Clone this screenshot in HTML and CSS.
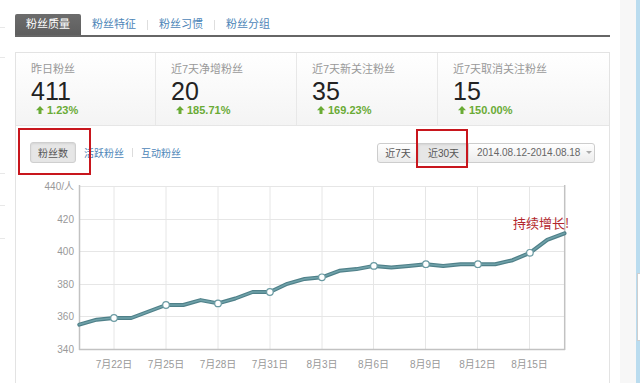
FILE: index.html
```html
<!DOCTYPE html>
<html lang="zh-CN">
<head>
<meta charset="utf-8">
<title>粉丝质量</title>
<link rel="stylesheet" href="styles.css">
</head>
<body>
<div class="page">
  <div class="edge">
    <i class="edge-line"></i><i class="edge-line"></i><i class="edge-line"></i><i class="edge-line"></i><i class="edge-line"></i>
  </div>
  <main class="main">
    <nav class="tabs">
      <span class="tab active">粉丝质量</span>
      <span class="tab">粉丝特征</span>
      <span class="tab-sep"></span>
      <span class="tab">粉丝习惯</span>
      <span class="tab-sep"></span>
      <span class="tab">粉丝分组</span>
    </nav>
    <section class="card">
      <div class="stats">
        <div class="stat">
          <div class="stat-label">昨日粉丝</div>
          <div class="stat-num">411</div>
          <div class="stat-pct"><svg class="up" viewBox="0 0 8 8"><path d="M4 0 L8 4.2 L5.5 4.2 L5.5 8 L2.5 8 L2.5 4.2 L0 4.2 Z"/></svg>1.23%</div>
        </div>
        <div class="stat">
          <div class="stat-label">近7天净增粉丝</div>
          <div class="stat-num">20</div>
          <div class="stat-pct"><svg class="up" viewBox="0 0 8 8"><path d="M4 0 L8 4.2 L5.5 4.2 L5.5 8 L2.5 8 L2.5 4.2 L0 4.2 Z"/></svg>185.71%</div>
        </div>
        <div class="stat">
          <div class="stat-label">近7天新关注粉丝</div>
          <div class="stat-num">35</div>
          <div class="stat-pct"><svg class="up" viewBox="0 0 8 8"><path d="M4 0 L8 4.2 L5.5 4.2 L5.5 8 L2.5 8 L2.5 4.2 L0 4.2 Z"/></svg>169.23%</div>
        </div>
        <div class="stat">
          <div class="stat-label">近7天取消关注粉丝</div>
          <div class="stat-num">15</div>
          <div class="stat-pct"><svg class="up" viewBox="0 0 8 8"><path d="M4 0 L8 4.2 L5.5 4.2 L5.5 8 L2.5 8 L2.5 4.2 L0 4.2 Z"/></svg>150.00%</div>
        </div>
      </div>
      <div class="controls">
        <div class="ctrl-left">
          <span class="btn-fans">粉丝数</span>
          <span class="link first">活跃粉丝</span>
          <span class="link-sep"></span>
          <span class="link">互动粉丝</span>
        </div>
        <div class="range">
          <span class="range-item r7">近7天</span>
          <span class="range-item r30 active">近30天</span>
          <span class="range-item rdate">2014.08.12-2014.08.18<i class="caret"></i></span>
        </div>
        <div class="mark mark-fans"></div>
        <div class="mark mark-30"></div>
      </div>
      <svg class="chart" width="593" height="207" viewBox="16 176 593 207">
        <g stroke="#e6e6e6" stroke-width="1">
          <line x1="79" y1="186.5" x2="565" y2="186.5"/>
          <line x1="79" y1="219.5" x2="565" y2="219.5"/>
          <line x1="79" y1="251.5" x2="565" y2="251.5"/>
          <line x1="79" y1="284.5" x2="565" y2="284.5"/>
          <line x1="79" y1="316.5" x2="565" y2="316.5"/>
          <line x1="114" y1="186" x2="114" y2="349"/>
          <line x1="166" y1="186" x2="166" y2="349"/>
          <line x1="218" y1="186" x2="218" y2="349"/>
          <line x1="270" y1="186" x2="270" y2="349"/>
          <line x1="322" y1="186" x2="322" y2="349"/>
          <line x1="373.5" y1="186" x2="373.5" y2="349"/>
          <line x1="425.5" y1="186" x2="425.5" y2="349"/>
          <line x1="477.5" y1="186" x2="477.5" y2="349"/>
          <line x1="529.5" y1="186" x2="529.5" y2="349"/>
        </g>
        <g stroke="#c2c2c2" stroke-width="1.5">
          <line x1="79.5" y1="185" x2="79.5" y2="350"/>
          <line x1="79" y1="349.5" x2="565" y2="349.5"/>
          <line x1="564.7" y1="185" x2="564.7" y2="350"/>
        </g>
        <g class="ylab" text-anchor="end">
          <text x="74" y="190">440/人</text>
          <text x="74" y="223">420</text>
          <text x="74" y="255">400</text>
          <text x="74" y="288">380</text>
          <text x="74" y="320">360</text>
          <text x="74" y="353">340</text>
        </g>
        <g class="xlab" text-anchor="middle">
          <text x="114" y="368">7月22日</text>
          <text x="166" y="368">7月25日</text>
          <text x="218" y="368">7月28日</text>
          <text x="270" y="368">7月31日</text>
          <text x="322" y="368">8月3日</text>
          <text x="373.5" y="368">8月6日</text>
          <text x="425.5" y="368">8月9日</text>
          <text x="477.5" y="368">8月12日</text>
          <text x="529.5" y="368">8月15日</text>
        </g>
        <polyline class="line-outer" points="79.3,324.6 96.6,319.7 114,318 131.3,318 148.6,311.5 166,305 183.3,305 200.6,300.1 218,303.4 235.3,298.5 252.6,292 269.9,292 287.3,283.8 304.6,278.9 321.9,277.3 339.3,270.8 356.6,269.1 373.9,265.9 391.3,267.5 408.6,265.9 425.9,264.2 443.2,265.9 460.6,264.2 477.9,264.2 495.2,264.2 512.6,260.2 529.9,252.8 547.2,239.8 564.5,233.3"/>
        <polyline class="line-inner" points="79.3,324.6 96.6,319.7 114,318 131.3,318 148.6,311.5 166,305 183.3,305 200.6,300.1 218,303.4 235.3,298.5 252.6,292 269.9,292 287.3,283.8 304.6,278.9 321.9,277.3 339.3,270.8 356.6,269.1 373.9,265.9 391.3,267.5 408.6,265.9 425.9,264.2 443.2,265.9 460.6,264.2 477.9,264.2 495.2,264.2 512.6,260.2 529.9,252.8 547.2,239.8 564.5,233.3"/>
        <g class="dots">
          <circle cx="114" cy="318" r="3.3"/>
          <circle cx="166" cy="305" r="3.3"/>
          <circle cx="218" cy="303.4" r="3.3"/>
          <circle cx="269.9" cy="292" r="3.3"/>
          <circle cx="321.9" cy="277.3" r="3.3"/>
          <circle cx="373.9" cy="265.9" r="3.3"/>
          <circle cx="425.9" cy="264.2" r="3.3"/>
          <circle cx="477.9" cy="264.2" r="3.3"/>
          <circle cx="529.9" cy="252.8" r="3.3"/>
        </g>
        <text class="note" x="513" y="227.5">持续增长!</text>
      </svg>
    </section>
  </main>
  <aside class="side">
    <div class="side-gap"></div>
    <div class="side-gray"></div>
    <div class="side-blue"><div class="side-box"></div></div>
  </aside>
</div>
</body>
</html>
```
FILE: styles.css
```css
html, body {
  margin: 0;
  padding: 0;
  background: #fff;
}
body {
  font-family: "Liberation Sans", "Noto Sans CJK SC", sans-serif;
  color: #333;
}
.page {
  display: flex;
  width: 640px;
  height: 383px;
  overflow: hidden;
}

/* faint left edge marks */
.edge {
  width: 5px;
  flex: none;
  display: flex;
  flex-direction: column;
}
.edge-line {
  display: block;
  height: 1px;
  background: #e8e8e8;
}
.edge-line:nth-child(1) { margin-top: 27px; }
.edge-line:nth-child(2) { margin-top: 29px; }
.edge-line:nth-child(3) { margin-top: 115px; }
.edge-line:nth-child(4) { margin-top: 31px; }
.edge-line:nth-child(5) { margin-top: 32px; }

.main {
  width: 605px;
  flex: none;
  box-sizing: border-box;
  padding: 14px 0 0 10px;
}

/* tabs */
.tabs {
  display: flex;
  align-items: center;
  height: 21px;
  border-bottom: 2px solid #666;
}
.tab {
  padding: 0 11px;
  font-size: 11px;
  line-height: 21px;
  color: #4d86b8;
}
.tab.active {
  background: linear-gradient(#6c6c6c, #5e5e5e);
  color: #fff;
  border-radius: 2px 2px 0 0;
}
.tab-sep {
  width: 1px;
  height: 10px;
  background: #dedede;
}

/* card */
.card {
  margin-top: 15px;
  border: 1px solid #e3e3e3;
  border-bottom: none;
}
.stats {
  display: grid;
  grid-template-columns: 140px 141px 141px 1fr;
  background: linear-gradient(#ffffff, #f4f4f4);
  border-bottom: 1px solid #e6e6e6;
}
.stat {
  box-sizing: border-box;
  padding: 9px 0 8px 15px;
  border-right: 1px solid #e8e8e8;
}
.stat:last-child {
  border-right: none;
}
.stat-label {
  font-size: 11px;
  line-height: 14px;
  color: #999;
}
.stat-num {
  margin-top: 3px;
  font-size: 25px;
  line-height: 24px;
  color: #222;
}
.stat-pct {
  display: flex;
  align-items: center;
  padding-left: 5px;
  font-size: 11px;
  line-height: 14px;
  font-weight: bold;
  color: #6aab35;
}
.up {
  width: 8px;
  height: 8px;
  margin-right: 3px;
  fill: #6aab35;
}

/* controls row */
.controls {
  position: relative;
  display: flex;
  justify-content: space-between;
  align-items: center;
  height: 21px;
  padding: 16px 14px 13px 14px;
}
.ctrl-left {
  display: flex;
  align-items: center;
}
.btn-fans {
  box-sizing: border-box;
  width: 46px;
  height: 21px;
  display: flex;
  align-items: center;
  justify-content: center;
  border: 1px solid #cfcfcf;
  border-radius: 3px;
  background: #e6e6e6;
  box-shadow: inset 0 1px 2px rgba(0, 0, 0, 0.08);
  font-size: 10px;
  color: #555;
}
.link {
  font-size: 10px;
  color: #4d86b8;
}
.link.first {
  margin-left: 8px;
}
.link-sep {
  width: 1px;
  height: 9px;
  margin: 0 8px;
  background: #dcdcdc;
}
.range {
  display: flex;
  height: 20px;
  box-sizing: border-box;
  border: 1px solid #cdcdcd;
  border-radius: 3px;
  background: linear-gradient(#ffffff, #ececec);
  font-size: 10px;
  color: #555;
}
.range-item {
  display: flex;
  align-items: center;
  justify-content: center;
  box-sizing: border-box;
  border-right: 1px solid #d3d3d3;
}
.r7 { width: 41px; }
.r30 { width: 50px; }
.r30.active {
  background: #e6e6e6;
  box-shadow: inset 0 1px 2px rgba(0, 0, 0, 0.08);
}
.rdate {
  width: 125px;
  border-right: none;
  justify-content: flex-start;
  padding-left: 8px;
  color: #666;
}
.caret {
  display: inline-block;
  margin-left: 6px;
  width: 0;
  height: 0;
  border-left: 3px solid transparent;
  border-right: 3px solid transparent;
  border-top: 3px solid #aaa;
}
.mark {
  position: absolute;
  box-sizing: border-box;
  border: 2px solid #c8161d;
}
.mark-fans {
  left: 2px;
  top: 2px;
  width: 73px;
  height: 47px;
}
.mark-30 {
  left: 400px;
  top: 3px;
  width: 52px;
  height: 39px;
}

/* chart */
.chart {
  display: block;
}
.ylab text,
.xlab text {
  font-family: "Liberation Sans", "Noto Sans CJK SC", sans-serif;
  font-size: 10px;
  fill: #999;
}
.line-outer {
  fill: none;
  stroke: #4f8089;
  stroke-width: 4;
  stroke-linejoin: round;
  stroke-linecap: round;
}
.line-inner {
  fill: none;
  stroke: #6fa1a9;
  stroke-width: 1.6;
  stroke-linejoin: round;
  stroke-linecap: round;
}
.dots circle {
  fill: #fff;
  stroke: #6a9aa2;
  stroke-width: 1.2;
}
.note {
  font-family: "Noto Sans CJK SC", sans-serif;
  font-size: 13px;
  fill: #b3262c;
}

/* right side strip */
.side {
  flex: 1;
  display: flex;
}
.side-gap {
  width: 10px;
  background: #fff;
}
.side-gray {
  width: 16px;
  background: #f7f7f7;
}
.side-blue {
  flex: 1;
  background: #badcef;
  padding-top: 273px;
}
.side-box {
  height: 66px;
  margin-left: 1px;
  background: #fff;
  border: 1px solid #cfcfcf;
  border-right: none;
}
```
